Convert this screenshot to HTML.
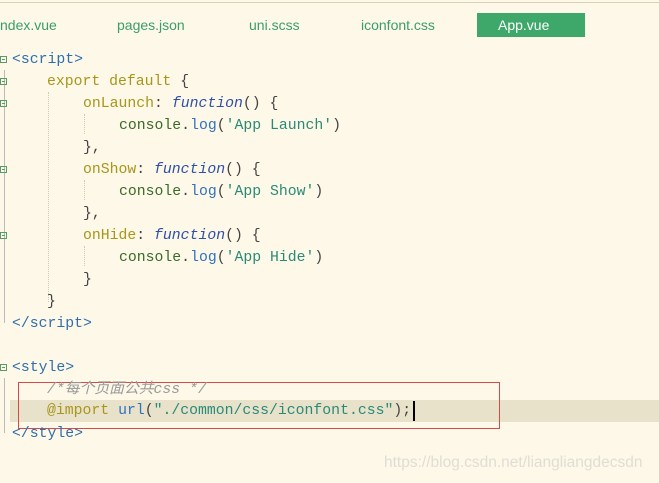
<!DOCTYPE html>
<html><head><meta charset="utf-8"><style>
body{margin:0;width:659px;height:483px;background:#fdf8e7;overflow:hidden;position:relative;font-family:"Liberation Mono","Noto Sans CJK SC",monospace;}
.topline{position:absolute;left:0;top:2px;width:659px;height:1px;background:#d8d3b8;}
.tab{position:absolute;top:13px;height:24px;font:14px "Liberation Sans",sans-serif;line-height:25px;color:#3a9e68;}
.act{background:#3ea86a;color:#fff;left:477px;width:108px;padding-left:21px;box-sizing:border-box;}
.l{position:absolute;height:22px;line-height:22px;font-size:14.8px;white-space:pre;color:#333;}
.fold{position:absolute;left:0;width:7px;height:7px;border:1px solid #5a9a6a;box-sizing:border-box;}
.fold:after{content:"";position:absolute;left:1px;top:2px;width:3px;height:1px;background:#5a9a6a;}
.tag{color:#2f6fb0}.kw{color:#a8961a}.fn{color:#2f4fa8;font-style:italic}.co{color:#3d6a2a}.lg{color:#2f72c0}.st{color:#2a8a78}.cm{color:#999;font-style:italic}.p{color:#444}
.vg{position:absolute;width:0;border-left:1px dotted #cfcab5;}
</style></head><body>
<div class="topline"></div>
<div class="tab" style="left:0">ndex.vue</div>
<div class="tab" style="left:117px">pages.json</div>
<div class="tab" style="left:249px">uni.scss</div>
<div class="tab" style="left:361px">iconfont.css</div>
<div class="tab act">App.vue</div>

<div style="position:absolute;left:10px;top:400px;width:649px;height:22px;background:#e8e2cb;"></div>
<div style="position:absolute;left:18px;top:382px;width:482px;height:47px;border:1px solid #d84a4a;box-sizing:border-box;"></div>

<div style="position:absolute;left:4px;top:70px;height:253px;border-left:1px solid #bbb;"></div>
<div style="position:absolute;left:4px;top:378px;height:55px;border-left:1px solid #bbb;"></div>
<div class="vg" style="left:48px;top:92px;height:210px"></div>
<div class="vg" style="left:84px;top:114px;height:20px"></div>
<div class="vg" style="left:84px;top:180px;height:20px"></div>
<div class="vg" style="left:84px;top:246px;height:20px"></div>

<div class="fold" style="top:56px"></div>
<div class="fold" style="top:78px"></div>
<div class="fold" style="top:100px"></div>
<div class="fold" style="top:166px"></div>
<div class="fold" style="top:232px"></div>
<div class="fold" style="top:364px"></div>

<div class="l" style="left:12px;top:49px"><span class="tag">&lt;script&gt;</span></div>
<div class="l" style="left:47px;top:71px"><span class="kw">export default</span> <span class="p">{</span></div>
<div class="l" style="left:83px;top:93px"><span class="kw">onLaunch</span><span class="p">: </span><span class="fn">function</span><span class="p">() {</span></div>
<div class="l" style="left:119px;top:115px"><span class="co">console</span><span class="p">.</span><span class="lg">log</span><span class="p">(</span><span class="st">'App Launch'</span><span class="p">)</span></div>
<div class="l" style="left:83px;top:137px"><span class="p">},</span></div>
<div class="l" style="left:83px;top:159px"><span class="kw">onShow</span><span class="p">: </span><span class="fn">function</span><span class="p">() {</span></div>
<div class="l" style="left:119px;top:181px"><span class="co">console</span><span class="p">.</span><span class="lg">log</span><span class="p">(</span><span class="st">'App Show'</span><span class="p">)</span></div>
<div class="l" style="left:83px;top:203px"><span class="p">},</span></div>
<div class="l" style="left:83px;top:225px"><span class="kw">onHide</span><span class="p">: </span><span class="fn">function</span><span class="p">() {</span></div>
<div class="l" style="left:119px;top:247px"><span class="co">console</span><span class="p">.</span><span class="lg">log</span><span class="p">(</span><span class="st">'App Hide'</span><span class="p">)</span></div>
<div class="l" style="left:83px;top:269px"><span class="p">}</span></div>
<div class="l" style="left:47px;top:291px"><span class="p">}</span></div>
<div class="l" style="left:12px;top:313px"><span class="tag">&lt;/script&gt;</span></div>
<div class="l" style="left:12px;top:357px"><span class="tag">&lt;style&gt;</span></div>
<div class="l" style="left:47px;top:379px"><span class="cm">/*每个页面公共css */</span></div>
<div class="l" style="left:47px;top:400px"><span class="kw">@import</span> <span class="lg">url</span><span class="p">(</span><span class="st">"./common/css/iconfont.css"</span><span class="p">);</span></div>
<div style="position:absolute;left:413px;top:401px;width:2px;height:20px;background:#000;"></div>
<div class="l" style="left:12px;top:423px"><span class="tag">&lt;/style&gt;</span></div>

<div style="position:absolute;left:384px;top:454px;font:15.5px 'Liberation Sans',sans-serif;color:#e0ddd5;">https://blog.csdn.net/liangliangdecsdn</div>
</body></html>
